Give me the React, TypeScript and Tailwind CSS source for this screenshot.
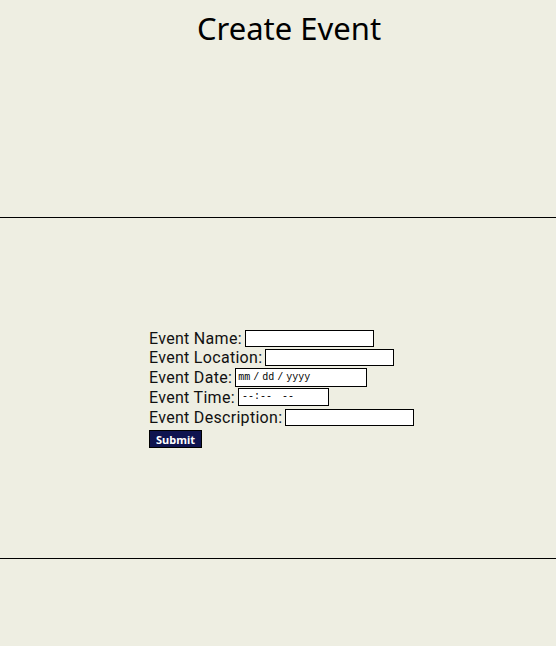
import React from "react";

const labelFont = { fontFamily: "'Noto Sans', sans-serif" };
const rowFont = { fontFamily: "Roboto, 'Noto Sans', sans-serif" };
const monoFont = { fontFamily: "'Liberation Mono', monospace" };

function Row({ label, h, children }: { label: string; h: string; children: React.ReactNode }) {
  return (
    <div className={`flex items-center gap-[3px] ${h}`}>
      <label className="text-[16px] leading-[17px] text-[#111] tracking-[0.3px]" style={rowFont}>
        {label}
      </label>
      {children}
    </div>
  );
}

export default function App() {
  return (
    <div className="min-h-[646px] w-full bg-[#eeeee2] text-black" style={labelFont}>
      <header className="h-[217px] flex justify-center pt-[9px] pl-[22px]">
        <h1 className="text-[31px] leading-[38px] font-normal">Create Event</h1>
      </header>
      <hr className="border-0 h-px bg-black" />
      <main className="h-[340px] pt-[111px] pl-[149px]">
        <form className="flex flex-col" onSubmit={(e) => e.preventDefault()}>
          <Row label="Event Name:" h="h-[19px]">
            <input type="text" className="w-[129px] h-[17px] border border-black bg-white outline-none" />
          </Row>
          <Row label="Event Location:" h="h-[19px]">
            <input type="text" className="w-[129px] h-[17px] border border-black bg-white outline-none" />
          </Row>
          <Row label="Event Date:" h="h-[20px]">
            <span
              className="w-[132px] h-[19px] border border-black bg-white pl-[2px] text-[10px] leading-[17px] text-black whitespace-pre select-none [word-spacing:-3px]"
              style={monoFont}
            >
              {"mm / dd / yyyy"}
            </span>
          </Row>
          <Row label="Event Time:" h="h-[20px]">
            <span
              className="w-[91px] h-[18px] border border-black bg-white pl-[3px] text-[10px] leading-[16px] text-black whitespace-pre select-none [word-spacing:-1px]"
              style={monoFont}
            >
              {"--:--  --"}
            </span>
          </Row>
          <Row label="Event Description:" h="h-[21px]">
            <input type="text" className="w-[129px] h-[17px] border border-black bg-white outline-none" />
          </Row>
          <div className="flex mt-[2px]">
            <button
              type="submit"
              className="w-[53px] h-[18px] bg-[#0f1450] border border-black text-white text-[11px] font-bold leading-none"
            >
              Submit
            </button>
          </div>
        </form>
      </main>
      <hr className="border-0 h-px bg-black" />
    </div>
  );
}
